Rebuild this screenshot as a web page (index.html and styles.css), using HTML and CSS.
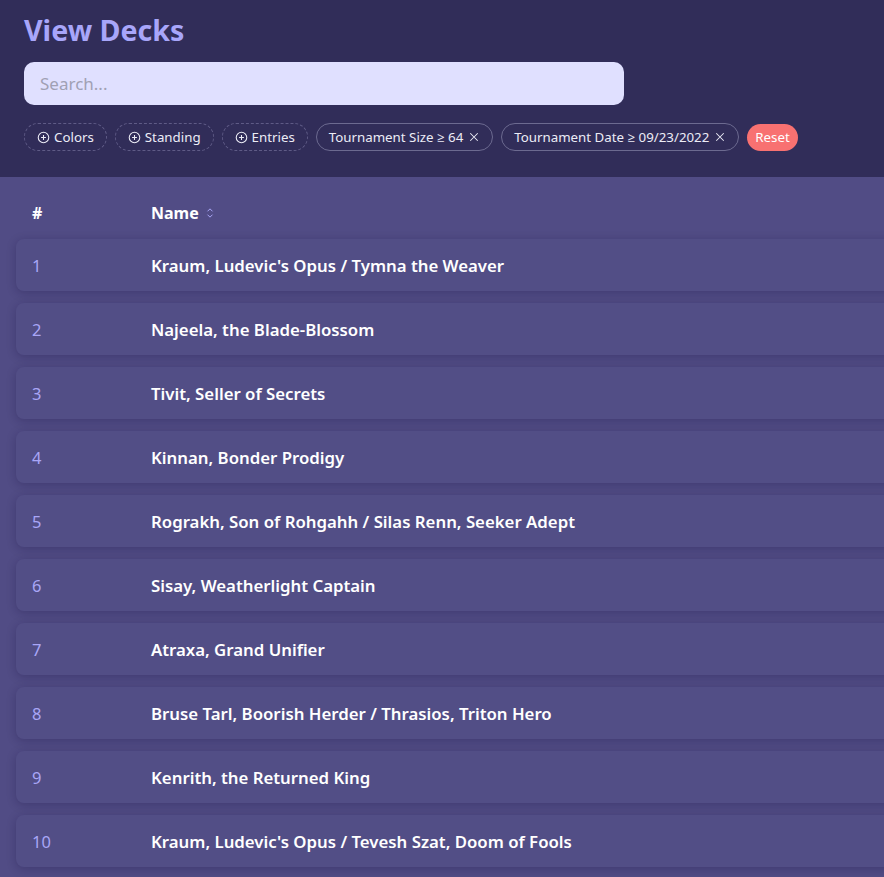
FILE: index.html
```html
<!DOCTYPE html>
<html>
<head>
<meta charset="utf-8">
<link rel="stylesheet" href="styles.css">
</head>
<body>
<header class="top">
  <h1 class="title">View Decks</h1>
  <input class="search" type="text" placeholder="Search...">
  <div class="chips">
    <span class="chip dashed"><svg class="ico" viewBox="0 0 16 16"><circle cx="8" cy="8" r="6.5" fill="none" stroke="currentColor" stroke-width="1.3"/><path d="M8 5v6M5 8h6" stroke="currentColor" stroke-width="1.3"/></svg>Colors</span>
    <span class="chip dashed"><svg class="ico" viewBox="0 0 16 16"><circle cx="8" cy="8" r="6.5" fill="none" stroke="currentColor" stroke-width="1.3"/><path d="M8 5v6M5 8h6" stroke="currentColor" stroke-width="1.3"/></svg>Standing</span>
    <span class="chip dashed"><svg class="ico" viewBox="0 0 16 16"><circle cx="8" cy="8" r="6.5" fill="none" stroke="currentColor" stroke-width="1.3"/><path d="M8 5v6M5 8h6" stroke="currentColor" stroke-width="1.3"/></svg>Entries</span>
    <span class="chip solid">Tournament Size ≥ 64<svg class="x" viewBox="0 0 16 16"><path d="M3 3l10 10M13 3L3 13" stroke="currentColor" stroke-width="1.4"/></svg></span>
    <span class="chip solid">Tournament Date ≥ 09/23/2022<svg class="x" viewBox="0 0 16 16"><path d="M3 3l10 10M13 3L3 13" stroke="currentColor" stroke-width="1.4"/></svg></span>
    <span class="reset">Reset</span>
  </div>
</header>
<main class="table">
  <div class="thead">
    <span class="c-num">#</span>
    <span class="c-name">Name <svg class="sort" viewBox="0 0 12 16"><path d="M3 6l3-3 3 3M3 10l3 3 3-3" fill="none" stroke="currentColor" stroke-width="1.2"/></svg></span>
  </div>
  <div class="row"><span class="c-num">1</span><span class="c-name">Kraum, Ludevic's Opus / Tymna the Weaver</span></div>
  <div class="row"><span class="c-num">2</span><span class="c-name">Najeela, the Blade-Blossom</span></div>
  <div class="row"><span class="c-num">3</span><span class="c-name">Tivit, Seller of Secrets</span></div>
  <div class="row"><span class="c-num">4</span><span class="c-name">Kinnan, Bonder Prodigy</span></div>
  <div class="row"><span class="c-num">5</span><span class="c-name">Rograkh, Son of Rohgahh / Silas Renn, Seeker Adept</span></div>
  <div class="row"><span class="c-num">6</span><span class="c-name">Sisay, Weatherlight Captain</span></div>
  <div class="row"><span class="c-num">7</span><span class="c-name">Atraxa, Grand Unifier</span></div>
  <div class="row"><span class="c-num">8</span><span class="c-name">Bruse Tarl, Boorish Herder / Thrasios, Triton Hero</span></div>
  <div class="row"><span class="c-num">9</span><span class="c-name">Kenrith, the Returned King</span></div>
  <div class="row"><span class="c-num">10</span><span class="c-name">Kraum, Ludevic's Opus / Tevesh Szat, Doom of Fools</span></div>
</main>
</body>
</html>
```
FILE: styles.css
```css
html, body {
  margin: 0;
  padding: 0;
  overflow: hidden;
  background: #514c85;
  font-family: "Noto Sans", "Open Sans", sans-serif;
}
.top {
  background: #312d59;
  padding: 12px 24px 26px;
}
.title {
  margin: 0;
  font-size: 28.6px;
  line-height: 36px;
  font-weight: 700;
  color: #a8a6fa;
}
.search {
  display: block;
  margin-top: 14px;
  box-sizing: border-box;
  width: 600px;
  height: 43px;
  border: none;
  border-radius: 10px;
  background: #e0e0ff;
  padding: 0 16px;
  font-family: inherit;
  font-size: 17px;
  color: #333;
  outline: none;
}
.search::placeholder {
  color: #a0a0b4;
}
.chips {
  margin-top: 18px;
  display: flex;
  align-items: center;
  gap: 8px;
}
.chip {
  box-sizing: border-box;
  height: 28px;
  display: inline-flex;
  align-items: center;
  border-radius: 999px;
  padding: 0 12px;
  font-size: 13.3px;
  color: #ececf6;
  white-space: nowrap;
}
.chip.dashed {
  border: 1px dashed #5f5b86;
}
.chip.solid {
  border: 1px solid #6c6a90;
}
.ico {
  width: 13px;
  height: 13px;
  margin-right: 4px;
}
.x {
  width: 12px;
  height: 12px;
  margin-left: 5px;
}
.reset {
  height: 27px;
  display: inline-flex;
  align-items: center;
  padding: 0 8px;
  border-radius: 999px;
  background: #f87171;
  color: #fff;
  font-size: 13.3px;
}
.table {
  width: 1100px;
  padding: 16px 0 0 16px;
}
.thead {
  display: flex;
  align-items: center;
  height: 40px;
  padding-left: 16px;
  margin-bottom: 6px;
  color: #fff;
  font-weight: 700;
  font-size: 16px;
}
.row {
  display: flex;
  align-items: center;
  height: 52px;
  padding-left: 16px;
  margin-bottom: 12px;
  background: #524e86;
  border-radius: 8px;
  box-shadow: 0 2px 10px rgba(20, 15, 60, 0.28);
}
.c-num {
  width: 119px;
  flex: none;
}
.row .c-num {
  color: #a9a6f6;
  font-size: 16.5px;
}
.c-name {
  display: inline-flex;
  align-items: center;
}
.row .c-name {
  color: #fff;
  font-weight: 600;
  font-size: 16.8px;
}
.sort {
  width: 10px;
  height: 14px;
  margin-left: 6px;
  color: #a9a6f6;
}
```
